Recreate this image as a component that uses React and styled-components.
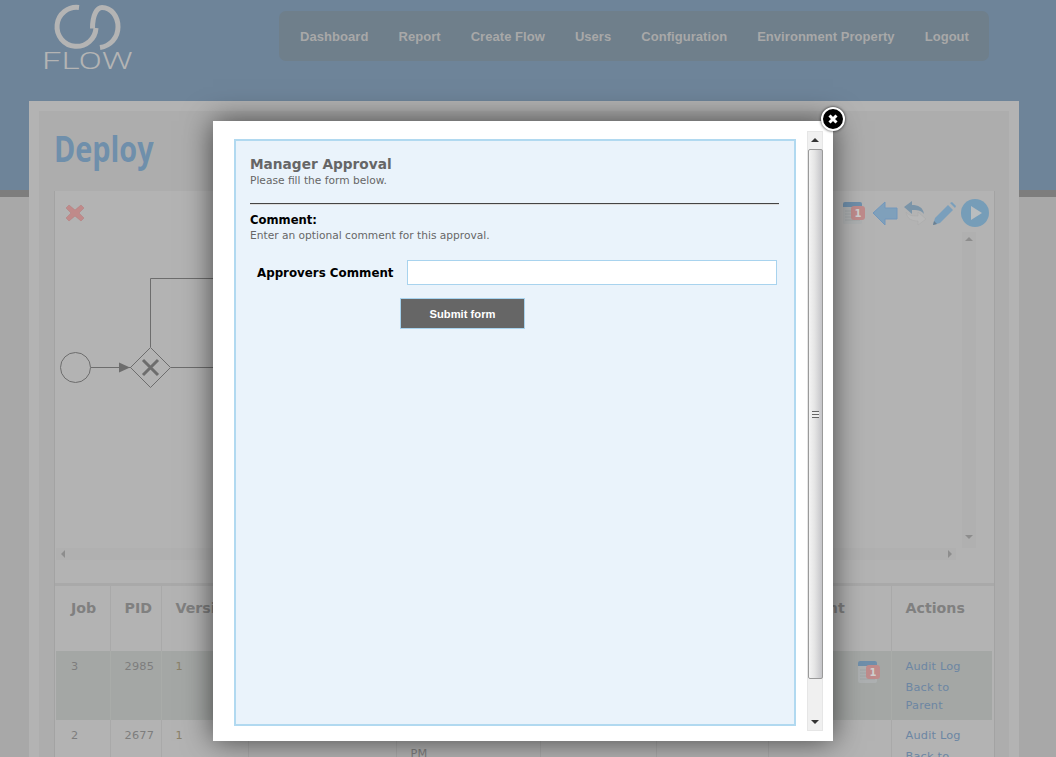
import React from 'react';
import styled, { createGlobalStyle } from 'styled-components';

const Global = createGlobalStyle`
  html, body { margin: 0; padding: 0; height: 100%; overflow: hidden; }
  body { font-family: "DejaVu Sans", Verdana, sans-serif; }
`;

const Page = styled.div`
  position: relative;
  height: 757px;
  overflow: hidden;
  background: linear-gradient(to bottom, #6e8499 0, #6e8499 190px, #7d7d7d 190px, #7d7d7d 197px, #a8a8a8 197px);
`;
const Header = styled.header`
  height: 101px;
  display: flex;
  justify-content: space-between;
  align-items: flex-start;
  padding: 0 67px 0 44px;
  box-sizing: border-box;
`;
const Logo = styled.div`
  width: 90px;
  display: flex;
  flex-direction: column;
`;
const LogoMark = styled.svg`
  display: block;
  width: 90px;
  height: 51px;
`;
const LogoWord = styled.span`
  display: block;
  margin-left: -2px;
  padding-top: 1px;
  font-family: Roboto, "Liberation Sans", sans-serif;
  font-weight: 300;
  font-size: 23px;
  line-height: 20px;
  color: #b4b4b4;
  transform-origin: left center;
  transform: scale(1.5, 1);
  white-space: nowrap;
`;
const Nav = styled.nav`
  margin-top: 11px;
  height: 50px;
  display: flex;
  align-items: center;
  gap: 30px;
  padding: 0 20px 0 21px;
  background: #6f7f8b;
  border-radius: 7px;
`;
const NavItem = styled.a`
  font-family: "Liberation Sans", Arial, sans-serif;
  font-weight: 700;
  font-size: 13px;
  letter-spacing: .05px;
  color: #a8a8a8;
  white-space: nowrap;
`;
const Frame = styled.main`
  margin: 0 37px 0 29px;
  padding: 10px;
  background: #b3b3b3;
`;
const Inner = styled.div`
  background: #adadad;
  padding: 0 14px 0 15px;
  height: 700px;
`;
const Title = styled.h1`
  margin: 0;
  height: 80px;
  box-sizing: border-box;
  padding: 16px 0 0 0;
  font-family: "Open Sans", "Liberation Sans", sans-serif;
  font-weight: 700;
  font-size: 36px;
  line-height: 44px;
  color: #6f8fab;
  transform-origin: left top;
  transform: scaleX(.8);
`;
const Panel = styled.section`
  background: #b3b3b3;
  border-left: 1px solid #a3a3a3;
  border-right: 1px solid #a3a3a3;
`;
const Toolbar = styled.div`
  height: 41px;
  display: flex;
  align-items: center;
  justify-content: space-between;
  padding: 3px 5px 0 10px;
  box-sizing: border-box;
`;
const ToolGroup = styled.div`
  display: flex;
  align-items: center;
  gap: 5px;
`;
const Icon = styled.svg`
  display: block;
  flex: none;
`;
const ScrollArea = styled.div`
  display: grid;
  grid-template-columns: 1fr 14px;
  grid-template-rows: 316px 12px;
  margin-right: 18px;
`;
const Diagram = styled.svg`
  display: block;
  width: 100%;
  height: 316px;
`;
const VBar = styled.div`
  background: #b0b0b0;
  display: flex;
  flex-direction: column;
  justify-content: space-between;
  align-items: center;
  padding: 5px 0 9px;
  box-sizing: border-box;
`;
const HBar = styled.div`
  background: #b0b0b0;
  margin-left: 1px;
  margin-right: 6px;
  display: flex;
  justify-content: space-between;
  align-items: center;
  padding: 0 4px 0 5px;
`;
const Arrow = styled.span`
  display: block;
  width: 0;
  height: 0;
  border-style: solid;
  border-color: transparent;
  border-width: 4px;
  ${p => p.$dir === 'up' && `border-top-width:0;border-bottom-color:${p.$c};`}
  ${p => p.$dir === 'down' && `border-bottom-width:0;border-top-color:${p.$c};`}
  ${p => p.$dir === 'left' && `border-left-width:0;border-right-color:${p.$c};`}
  ${p => p.$dir === 'right' && `border-right-width:0;border-left-color:${p.$c};`}
`;
const TableWrap = styled.div`
  margin-top: 23px;
  padding: 3px 2px 0 1px;
  background: linear-gradient(to bottom, #a9a9a9 0, #a9a9a9 3px, transparent 3px);
`;
const Table = styled.table`
  width: 936px;
  border-collapse: collapse;
  table-layout: fixed;
`;
const Th = styled.th`
  height: 65px;
  box-sizing: border-box;
  padding: 12px 14px 0 ${p => (p.$flush ? '0' : '14px')};
  vertical-align: top;
  text-align: left;
  font-size: 14.2px;
  line-height: 20px;
  font-weight: 700;
  color: #808080;
  border-left: 1px solid #a9a9a9;
  white-space: nowrap;
  &:first-child { border-left: 0; padding-left: 15px; }
`;
const Row = styled.tr`
  background: ${p => (p.$alt ? '#a4a7a5' : '#b3b3b3')};
`;
const Td = styled.td`
  height: 69px;
  box-sizing: border-box;
  padding: 7px 14px 0;
  vertical-align: top;
  font-size: 11.3px;
  line-height: 18px;
  letter-spacing: .2px;
  color: ${p => p.$c || '#7d7d7d'};
  border-left: 1px solid ${p => (p.$alt ? '#a9aca9' : '#a9a9a9')};
  &:first-child { border-left: 0; padding-left: 15px; }
`;
const IconCell = styled.div`
  display: flex;
  justify-content: flex-end;
  margin-right: -5px;
  padding-top: 2px;
`;
const ActionLink = styled.a`
  display: block;
  color: #6c86a3;
  & + & { margin-top: 3px; }
`;
const Col = styled.col`
  width: ${p => p.$w}px;
`;

const Modal = styled.div`
  position: absolute;
  left: 213px;
  top: 121px;
  width: 620px;
  height: 620px;
  background: #fff;
  box-shadow: 0 0 28px rgba(0, 0, 0, .62);
  display: flex;
  align-items: flex-start;
  box-sizing: border-box;
  padding: 10px 10px 0 21px;
`;
const Close = styled.button`
  position: absolute;
  right: -12px;
  top: -14px;
  width: 24px;
  height: 24px;
  padding: 0;
  border: 2px solid #fff;
  border-radius: 50%;
  background: #000;
  box-shadow: 0 0 3px rgba(0,0,0,.8);
  display: flex;
  align-items: center;
  justify-content: center;
`;
const FormBox = styled.div`
  margin-top: 8px;
  width: 562px;
  height: 587px;
  box-sizing: border-box;
  border: 2px solid #b1d9f0;
  background: #eaf3fb;
  padding: 15px 15px 0 14px;
  flex: none;
`;
const FormTitle = styled.h2`
  margin: 0 0 1px;
  font-size: 13.7px;
  line-height: 17px;
  font-weight: 700;
  color: #666;
`;
const Help = styled.p`
  margin: 0;
  font-size: 10.65px;
  line-height: 14px;
  color: #666;
`;
const Rule = styled.hr`
  margin: 15px 0 8px;
  border: 0;
  border-top: 1px solid #444;
  border-bottom: 1px solid #ddd;
  height: 0;
`;
const SectionTitle = styled.h3`
  margin: 0 0 2px;
  font-size: 11.6px;
  line-height: 14px;
  font-weight: 700;
  color: #000;
`;
const Field = styled.div`
  display: flex;
  align-items: center;
  margin-top: 17px;
  padding-left: 7px;
`;
const Label = styled.label`
  width: 150px;
  flex: none;
  padding-top: 1px;
  font-size: 11.85px;
  font-weight: 700;
  color: #000;
  white-space: nowrap;
`;
const Input = styled.input`
  width: 370px;
  height: 25px;
  box-sizing: border-box;
  border: 1px solid #a8d3ee;
  background: #fff;
  padding: 0 4px;
`;
const Submit = styled.button`
  display: block;
  margin: 13px 0 0 150px;
  width: 125px;
  height: 31px;
  box-sizing: border-box;
  border: 1px solid #a8d3ee;
  background: #666;
  color: #fff;
  font-family: "Liberation Sans", Arial, sans-serif;
  font-weight: 700;
  font-size: 11.2px;
`;
const Scroll = styled.div`
  margin-left: 11px;
  width: 16px;
  height: 600px;
  box-sizing: border-box;
  background: #f0f0f0;
  border: 1px solid #e6e6e6;
  flex: none;
  display: flex;
  flex-direction: column;
  align-items: center;
  padding: 6px 0 6px;
`;
const Thumb = styled.div`
  margin-top: 7px;
  width: 15px;
  height: 530px;
  flex: none;
  box-sizing: border-box;
  border: 1px solid #9a9a9a;
  border-radius: 2px;
  background: linear-gradient(to right, #f4f4f4 0, #e4e4e4 45%, #c4c4c8 100%);
  display: flex;
  align-items: center;
  justify-content: center;
`;
const Grip = styled.div`
  width: 7px;
  height: 7px;
  background: repeating-linear-gradient(to bottom, #666 0, #666 1px, #eee 1px, #eee 3px);
`;
const ScrollEnd = styled.div`
  margin-top: auto;
`;

const Calendar = () => (
  <Icon width="25" height="24" viewBox="0 0 25 24">
    <rect x="1" y="1" width="19" height="22" rx="2" fill="#adb0b1" />
    <path d="M1 6V3a2 2 0 0 1 2-2h15a2 2 0 0 1 2 2v3z" fill="#6f8fab" />
    <path d="M3 10h15M3 13h15M3 16h15M3 19h15" stroke="#a0a4a6" strokeWidth="1" />
    <rect x="9" y="5" width="14" height="14" rx="3" fill="#bf8b8b" />
    <text x="16" y="16" textAnchor="middle" fontFamily="DejaVu Sans" fontWeight="700" fontSize="10" fill="#cfcfcf">1</text>
  </Icon>
);

export default function App() {
  return (
    <Page>
      <Global />
      <Header>
        <Logo>
          <LogoMark viewBox="44 0 90 51">
            <g fill="none" stroke="#b4b4b4" strokeWidth="5">
              <path d="M79 7.5A19.5 19.5 0 1 0 96 28" />
              <path d="M92.5 28.5C92.5 15 97 7.5 102 7.5C111 7.5 118 16 118 27C118 38 110 46 100 47.5" />
            </g>
          </LogoMark>
          <LogoWord>FLOW</LogoWord>
        </Logo>
        <Nav>
          {['Dashboard', 'Report', 'Create Flow', 'Users', 'Configuration', 'Environment Property', 'Logout'].map(n => (
            <NavItem key={n}>{n}</NavItem>
          ))}
        </Nav>
      </Header>
      <Frame>
        <Inner>
          <Title>Deploy</Title>
          <Panel>
            <Toolbar>
              <Icon width="20" height="20" viewBox="0 0 20 20">
                <path d="M4 2l6 5 6-5 3 3-5 5 5 5-3 3-6-5-6 5-3-3 5-5-5-5z" fill="#c08a8a" stroke="#b37c7c" strokeWidth=".5" />
              </Icon>
              <ToolGroup>
                <Calendar />
                <Icon width="26" height="24" viewBox="0 0 26 24">
                  <path d="M1 12L13 1v6h12v11H13v6z" fill="#7fa0bb" stroke="#7297bc" />
                </Icon>
                <Icon width="24" height="26" viewBox="0 0 24 26">
                  <path d="M1 7l8-6v4c6 0 11 2 12 9-3-4-7-4-12-4v4z" fill="#7a94a8" />
                  <path d="M23 19l-8 6v-4c-6 0-11-2-12-9 3 4 7 4 12 4v-4z" fill="#b7b7b7" stroke="#a8a8a8" strokeWidth=".5" />
                </Icon>
                <Icon width="24" height="25" viewBox="0 0 24 25">
                  <path d="M1 24l2-7L16 4l5 5L8 22z" fill="#7a9fbc" />
                  <path d="M18 2l2-1 4 4-1 2z" fill="#7a9fbc" />
                  <path d="M1 24l1-4 3 3z" fill="#6b7f90" />
                </Icon>
                <Icon width="28" height="28" viewBox="0 0 28 28">
                  <circle cx="14" cy="14" r="14" fill="#769db8" />
                  <path d="M10 7l11 7-11 7z" fill="#b9bdbf" />
                </Icon>
              </ToolGroup>
            </Toolbar>
            <ScrollArea>
              <Diagram viewBox="-1 0 907 316">
                <g fill="none" stroke="#6d6d6d" strokeWidth="1">
                  <circle cx="19.5" cy="135.5" r="15" />
                  <path d="M35 135.5h40" />
                  <path d="M94.5 115.5l20 20-20 20-20-20z" />
                  <path d="M94.5 115V46.5H300M115 135.5H300" />
                </g>
                <path d="M63 130.5l11 5-11 5z" fill="#6d6d6d" />
                <path d="M87 128l15 15M102 128l-15 15" stroke="#6d6d6d" strokeWidth="3" fill="none" />
              </Diagram>
              <VBar>
                <Arrow $dir="up" $c="#8d8d8d" />
                <Arrow $dir="down" $c="#8d8d8d" />
              </VBar>
              <HBar>
                <Arrow $dir="left" $c="#8d8d8d" />
                <Arrow $dir="right" $c="#8d8d8d" />
              </HBar>
              <span />
            </ScrollArea>
            <TableWrap>
              <Table>
                <colgroup>
                  {[54, 51, 87, 148, 144, 116, 112, 123, 101].map((w, i) => <Col key={i} $w={w} />)}
                </colgroup>
                <thead>
                  <tr>
                    <Th>Job</Th><Th>PID</Th><Th>Version</Th><Th /><Th /><Th /><Th /><Th $flush>Comment</Th><Th>Actions</Th>
                  </tr>
                </thead>
                <tbody>
                  <Row $alt>
                    <Td $alt>3</Td><Td $alt>2985</Td><Td $alt $c="#8a8068">1</Td><Td $alt /><Td $alt /><Td $alt /><Td $alt />
                    <Td $alt><IconCell><Calendar /></IconCell></Td>
                    <Td $alt>
                      <ActionLink>Audit Log</ActionLink>
                      <ActionLink>Back to Parent</ActionLink>
                    </Td>
                  </Row>
                  <Row>
                    <Td>2</Td><Td>2677</Td><Td $c="#8a8068">1</Td><Td /><Td><br />PM</Td><Td /><Td /><Td />
                    <Td>
                      <ActionLink>Audit Log</ActionLink>
                      <ActionLink>Back to Parent</ActionLink>
                    </Td>
                  </Row>
                </tbody>
              </Table>
            </TableWrap>
          </Panel>
        </Inner>
      </Frame>
      <Modal>
        <Close aria-label="Close">
          <Icon width="12" height="12" viewBox="0 0 12 12">
            <path d="M2.5 2.5l7 7M9.5 2.5l-7 7" stroke="#fff" strokeWidth="3" />
          </Icon>
        </Close>
        <FormBox>
          <FormTitle>Manager Approval</FormTitle>
          <Help>Please fill the form below.</Help>
          <Rule />
          <SectionTitle>Comment:</SectionTitle>
          <Help>Enter an optional comment for this approval.</Help>
          <Field>
            <Label>Approvers Comment</Label>
            <Input />
          </Field>
          <Submit>Submit form</Submit>
        </FormBox>
        <Scroll>
          <Arrow $dir="up" $c="#333" />
          <Thumb><Grip /></Thumb>
          <ScrollEnd><Arrow $dir="down" $c="#333" /></ScrollEnd>
        </Scroll>
      </Modal>
    </Page>
  );
}
